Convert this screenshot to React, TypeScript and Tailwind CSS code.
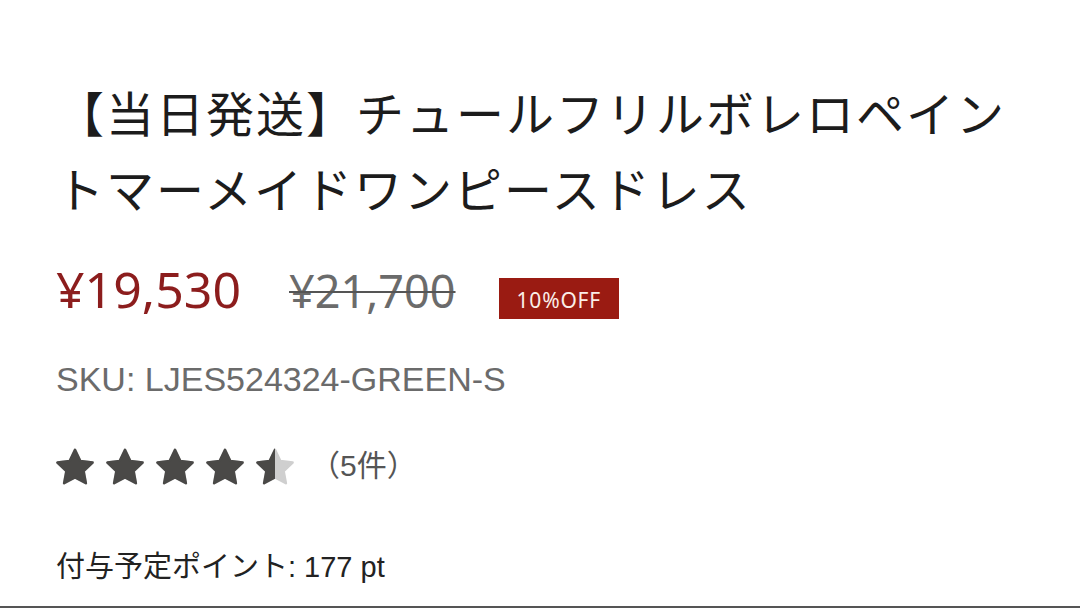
const STAR_PATH =
  "M12 1.8l3.05 6.35 6.95.9-5.1 4.85 1.3 6.9L12 17.45 5.8 20.8l1.3-6.9L2 9.05l6.95-.9L12 1.8z";

function Star({ fill = 1, id }: { fill?: number; id: string }) {
  return (
    <svg width="38" height="37" viewBox="1.2 1 21.6 20.6" className="shrink-0">
      <defs>
        <clipPath id={id}>
          <rect x="0" y="0" width={24 * fill} height="24" />
        </clipPath>
      </defs>
      <path d={STAR_PATH} fill="#cfcfcf" stroke="#cfcfcf" strokeWidth="1.4" strokeLinejoin="round" />
      <path
        d={STAR_PATH}
        fill="#4a4947"
        stroke="#4a4947"
        strokeWidth="1.4"
        strokeLinejoin="round"
        clipPath={`url(#${id})`}
      />
    </svg>
  );
}

export default function App() {
  const rating = [1, 1, 1, 1, 0.5];

  return (
    <div className="w-[1080px] h-[608px] bg-white overflow-hidden flex flex-col">
      <div className="px-[56px] pt-[73px] flex flex-col">
        <h1 className="font-['Noto_Sans_CJK_JP',sans-serif] text-[48px] leading-[76px] tracking-[2px] text-[#1c1c1c] font-normal">
          【当日発送】チュールフリルボレロペイン
          <br />
          トマーメイドワンピースドレス
        </h1>

        <div className="mt-[34px] flex items-baseline font-['Noto_Sans',sans-serif]">
          <span className="text-[50px] leading-[60px] text-[#8c1d1d]">¥19,530</span>
          <span className="ml-[48px] text-[45px] leading-[60px] text-[#6b6b6b] line-through decoration-[#555] decoration-2">
            ¥21,700
          </span>
          <span className="ml-[43px] inline-block h-[41px] pt-[3px] leading-[38px] px-[18px] bg-[#9a1b12] text-[21px] tracking-[0.8px] text-[#fbeee8]">
            10%OFF
          </span>
        </div>

        <p className="mt-[38px] font-['Liberation_Sans',sans-serif] text-[34px] leading-[40px] text-[#6b6b6b]">
          SKU: LJES524324-GREEN-S
        </p>

        <div className="mt-[48px] flex items-center gap-[12px] h-[38px]">
          {rating.map((r, i) => (
            <Star key={i} fill={r} id={`star-clip-${i}`} />
          ))}
          <span className="ml-[4px] font-['Liberation_Sans','Noto_Sans_CJK_JP',sans-serif] text-[30px] leading-[38px] text-[#555]">
            （5件）
          </span>
        </div>

        <p className="mt-[64px] font-['Liberation_Sans','Noto_Sans_CJK_JP',sans-serif] text-[29px] leading-[36px] text-[#222]">
          付与予定ポイント: 177 pt
        </p>
      </div>
      <div className="mt-auto h-[2px] bg-[#555]" />
    </div>
  );
}
